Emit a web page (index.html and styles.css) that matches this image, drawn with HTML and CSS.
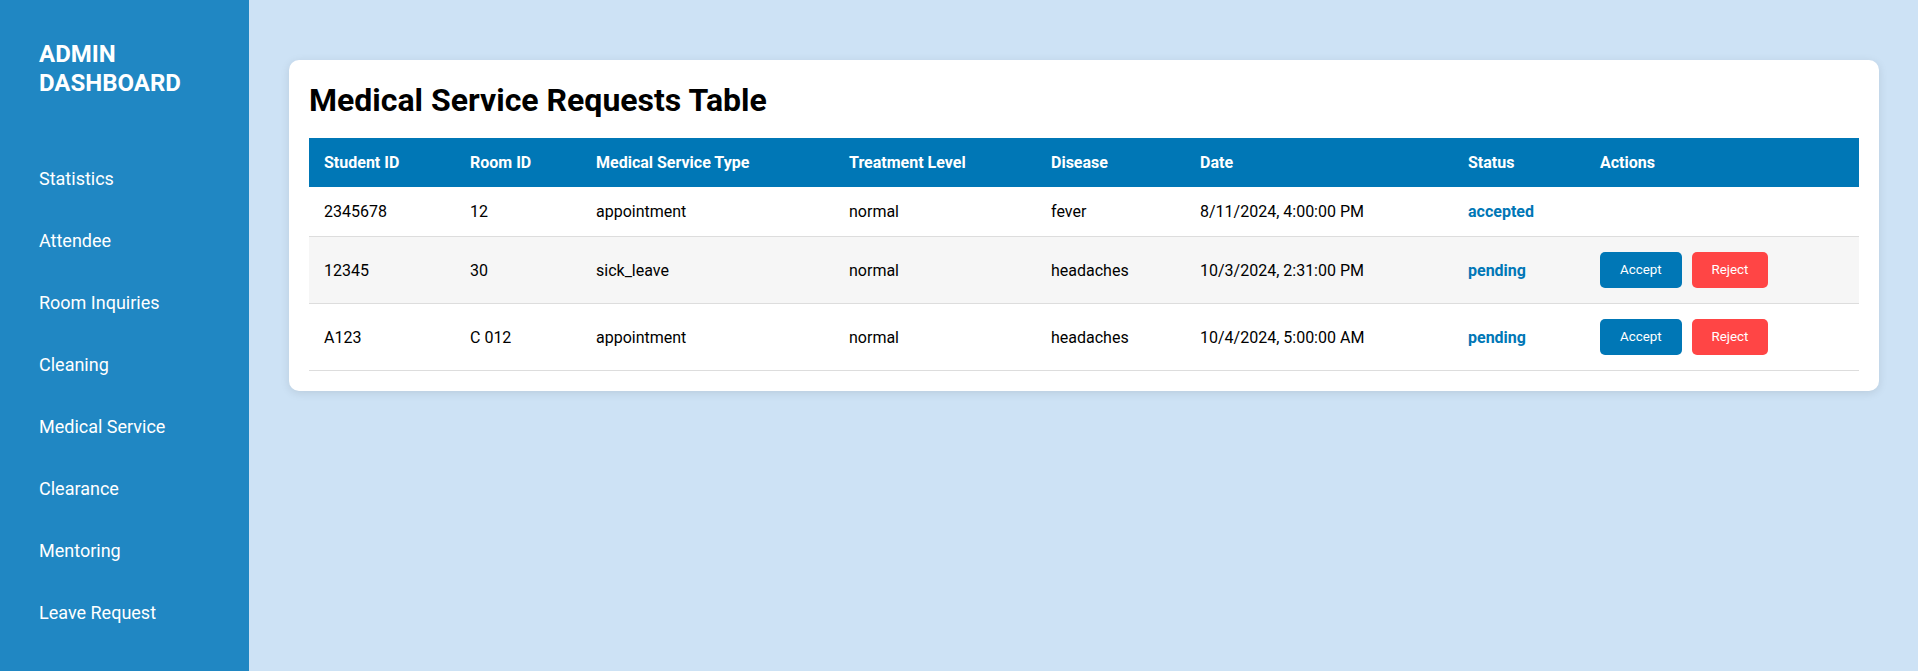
FILE: index.html
```html
<!DOCTYPE html>
<html>
<head>
<meta charset="utf-8">
<link rel="stylesheet" href="styles.css">
</head>
<body>
<div class="layout">
  <aside class="sidebar">
    <h2 class="brand">ADMIN DASHBOARD</h2>
    <nav class="nav">
      <a class="nav-item">Statistics</a>
      <a class="nav-item">Attendee</a>
      <a class="nav-item">Room Inquiries</a>
      <a class="nav-item">Cleaning</a>
      <a class="nav-item">Medical Service</a>
      <a class="nav-item">Clearance</a>
      <a class="nav-item">Mentoring</a>
      <a class="nav-item">Leave Request</a>
    </nav>
  </aside>
  <main class="main">
    <section class="card">
      <h1 class="title">Medical Service Requests Table</h1>
      <table class="table">
        <colgroup>
          <col class="c1"><col class="c2"><col class="c3"><col class="c4"><col class="c5"><col class="c6"><col class="c7"><col class="c8">
        </colgroup>
        <thead>
          <tr><th>Student ID</th><th>Room ID</th><th>Medical Service Type</th><th>Treatment Level</th><th>Disease</th><th>Date</th><th>Status</th><th>Actions</th></tr>
        </thead>
        <tbody>
          <tr><td>2345678</td><td>12</td><td>appointment</td><td>normal</td><td>fever</td><td>8/11/2024, 4:00:00 PM</td><td class="status">accepted</td><td></td></tr>
          <tr><td>12345</td><td>30</td><td>sick_leave</td><td>normal</td><td>headaches</td><td>10/3/2024, 2:31:00 PM</td><td class="status">pending</td><td><div class="actions"><button class="btn btn-accept">Accept</button><button class="btn btn-reject">Reject</button></div></td></tr>
          <tr><td>A123</td><td>C 012</td><td>appointment</td><td>normal</td><td>headaches</td><td>10/4/2024, 5:00:00 AM</td><td class="status">pending</td><td><div class="actions"><button class="btn btn-accept">Accept</button><button class="btn btn-reject">Reject</button></div></td></tr>
        </tbody>
      </table>
    </section>
  </main>
</div>
</body>
</html>
```

FILE: styles.css
```css
* { box-sizing: border-box; }
html, body { margin: 0; padding: 0; height: 100%; }
body {
  font-family: Roboto, "Liberation Sans", Arial, sans-serif;
  background: #cde2f5;
  color: #000;
}
.layout { display: flex; min-height: 100vh; }
.sidebar {
  width: 249px;
  flex: 0 0 249px;
  background: #2087c3;
  color: #fff;
  padding: 40px 39px;
}
.brand {
  margin: 0 0 50px;
  font-size: 24px;
  line-height: 29px;
  font-weight: 700;
  width: 150px;
}
.nav { display: flex; flex-direction: column; }
.nav-item {
  display: block;
  color: #fff;
  font-size: 18px;
  line-height: 22px;
  padding: 20px 0;
  text-decoration: none;
}
.main { flex: 1; padding: 60px 39px 20px 40px; }
.card {
  background: #fff;
  border-radius: 10px;
  padding: 20px 20px 20px;
  box-shadow: 0 2px 10px rgba(0,0,0,0.1);
}
.title {
  margin: 0 0 18px;
  font-size: 32px;
  line-height: 40px;
  font-weight: 700;
}
.table {
  width: 100%;
  border-collapse: collapse;
  table-layout: fixed;
  font-size: 16px;
}
.c1 { width: 146px; } .c2 { width: 126px; } .c3 { width: 253px; } .c4 { width: 202px; }
.c5 { width: 149px; } .c6 { width: 268px; } .c7 { width: 132px; } .c8 { width: auto; }
.table th {
  background: #0077b6;
  color: #fff;
  text-align: left;
  font-weight: 700;
  padding: 15px;
  line-height: 19px;
}
.table td {
  padding: 15px;
  line-height: 19px;
  border-bottom: 1px solid #ddd;
  text-align: left;
  vertical-align: middle;
}
.table tbody tr:nth-child(even) { background: #f6f6f6; }
.status { color: #0077b6; font-weight: 700; }
.actions { display: flex; gap: 10px; }
.btn {
  font-family: Roboto, "Liberation Sans", Arial, sans-serif;
  font-size: 13.333px;
  line-height: 16px;
  padding: 10px 20px;
  border: none;
  border-radius: 5px;
  color: #fff;
}
.btn-accept { background: #0077b6; }
.btn-reject { background: #ff4545; }
```
